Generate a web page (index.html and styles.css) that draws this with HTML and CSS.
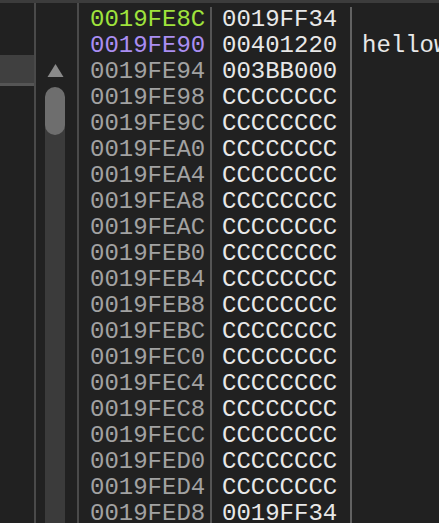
FILE: index.html
```html
<!DOCTYPE html>
<html>
<head>
<meta charset="utf-8">
<link rel="stylesheet" href="styles.css">
</head>
<body>
<div class="topband"></div>
<div class="main">
  <div class="leftpane">
    <div class="subcol">
      <div class="box"></div>
    </div>
    <div class="scrollbar">
      <svg class="arrow" width="17" height="15" viewBox="0 0 17 15"><polygon points="8.5,1 16.5,14 0.5,14" fill="#8a8a8a"/></svg>
      <div class="thumb"></div>
      <div class="track"></div>
    </div>
  </div>
  <div class="stack">
    <div class="addrcol" id="addr"></div>
    <div class="valcol" id="val"></div>
    <div class="comcol" id="com"></div>
  </div>
</div>
<script>
const rows = ["0019FE8C","0019FE90","0019FE94","0019FE98","0019FE9C","0019FEA0","0019FEA4","0019FEA8","0019FEAC","0019FEB0","0019FEB4","0019FEB8","0019FEBC","0019FEC0","0019FEC4","0019FEC8","0019FECC","0019FED0","0019FED4","0019FED8"];
const vals = ["0019FF34","00401220","003BB000","CCCCCCCC","CCCCCCCC","CCCCCCCC","CCCCCCCC","CCCCCCCC","CCCCCCCC","CCCCCCCC","CCCCCCCC","CCCCCCCC","CCCCCCCC","CCCCCCCC","CCCCCCCC","CCCCCCCC","CCCCCCCC","CCCCCCCC","CCCCCCCC","0019FF34"];
const coms = ["","hellow"];
const a = document.getElementById('addr'), v = document.getElementById('val'), c = document.getElementById('com');
rows.forEach((r,i)=>{
  const d=document.createElement('div'); d.className='row'+(i===0?' sp':i===1?' bp':''); d.textContent=r; a.appendChild(d);
  const e=document.createElement('div'); e.className='row'; e.textContent=vals[i]; v.appendChild(e);
  const f=document.createElement('div'); f.className='row'; f.textContent=coms[i]||''; c.appendChild(f);
});
</script>
</body>
</html>
```
FILE: styles.css
```css
html, body {
  margin: 0;
  padding: 0;
  background: #212121;
  width: 439px;
  height: 523px;
  overflow: hidden;
}
.topband {
  height: 3px;
  background: #3c3c3c;
}
.main {
  display: flex;
  height: 520px;
}
.leftpane {
  flex: none;
  width: 77px;
  display: flex;
  border-right: 2px solid #4a4a4a;
}
.subcol {
  flex: none;
  width: 34px;
  border-right: 2px solid #4a4a4a;
  padding-top: 52px;
}
.box {
  height: 28px;
  background: #404040;
  border-bottom: 3px solid #555;
}
.scrollbar {
  flex: none;
  margin-left: 9px;
  width: 20px;
  display: flex;
  flex-direction: column;
  align-items: center;
  padding-top: 60px;
}
.arrow {
  display: block;
  margin-bottom: 9px;
}
.thumb {
  width: 20px;
  height: 48px;
  background: #6e6e6e;
  border-radius: 10px;
  position: relative;
  z-index: 1;
}
.track {
  width: 20px;
  flex: 1;
  background: #3b3b3b;
  margin-top: -10px;
}
.stack {
  flex: none;
  display: flex;
  font-family: "Liberation Mono", monospace;
  font-size: 24px;
  padding-top: 4px;
}
.row {
  height: 26px;
  line-height: 26px;
  white-space: nowrap;
}
.addrcol {
  flex: none;
  width: 120px;
  padding-left: 11px;
  color: #a2a2a2;
  border-right: 2px solid #555;
}
.addrcol .sp { color: #9fe33c; }
.addrcol .bp { color: #aa8ef2; }
.valcol {
  flex: none;
  width: 128px;
  padding-left: 10px;
  color: #e8e8e8;
  border-right: 2px solid #626262;
}
.comcol {
  flex: none;
  padding-left: 10px;
  color: #e8e8e8;
}
```
